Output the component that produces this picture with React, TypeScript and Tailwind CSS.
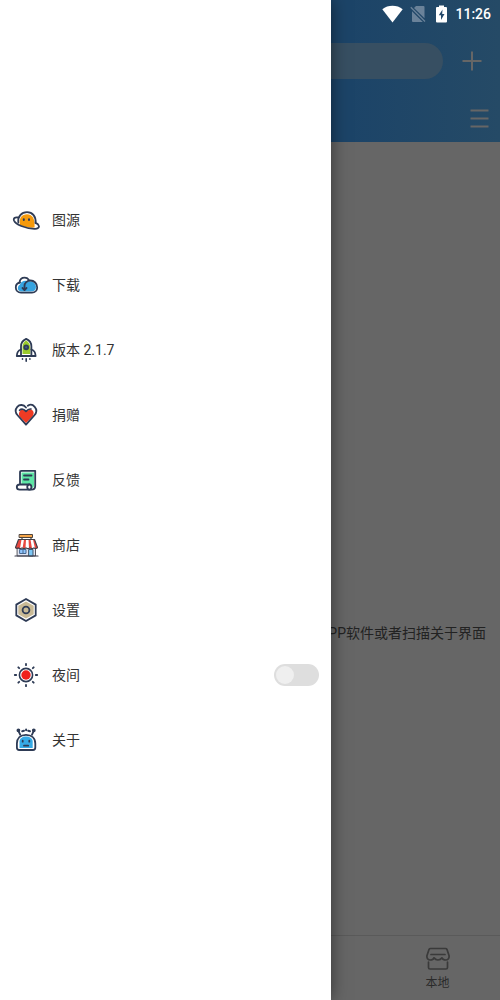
import { useState } from 'react';
import type { ReactNode } from 'react';

const INK = '#2e3b55';

interface MenuItem {
  id: string;
  label: string;
  icon: ReactNode;
}

function MenuIcon({ children }: { children: ReactNode }) {
  return (
    <svg
      viewBox="0 0 28 28"
      className="size-7 shrink-0"
      fill="none"
      stroke={INK}
      strokeWidth="1.8"
      strokeLinecap="round"
      strokeLinejoin="round"
      aria-hidden="true"
    >
      {children}
    </svg>
  );
}

const menuItems: MenuItem[] = [
  {
    id: 'source',
    label: '图源',
    icon: (
      <MenuIcon>
        <path d="M8 19C6.500 12 10 8.300 15 8.300S23 12 22.600 21.500C18 22 12 21 8 19Z" fill="#f59a0c" stroke="none" />
        <path d="M6.300 16.500C5.500 10.500 9.500 6.200 15 6.200S24.200 10.500 23.600 17" />
        <path d="M6 11.500C2.500 11 1.300 12.300 2 14.500C3.500 18.500 13 22.500 22.500 22.800C25.500 23 27.500 21.600 26.800 19.800C26.300 18.300 25 17.300 23.600 17" />
        <path d="M11.800 13.300v0.800M17 13.300v0.800" strokeWidth="2" />
      </MenuIcon>
    ),
  },
  {
    id: 'download',
    label: '下载',
    icon: (
      <MenuIcon>
        <path d="M9 20.500C5 20 5 15 8 13.500C9 9.500 14 9 16 10.500C21 9 24 13 24 16C24 19 22 20.500 19 20.500Z" fill="#35a3e0" stroke="none" />
        <path d="M8 11.500C5 12 3.800 14.300 3.800 16.500C3.800 19.500 6 21.600 9 21.600H20C23 21.600 25.200 19.500 25.200 16.500C25.200 12.500 22 9.500 18.500 9.500C15 9.500 12.500 12 12.500 15V18.500" />
        <path d="M7.500 11.500C7.800 8.500 10 6.700 12.700 6.700C14.500 6.700 15.800 7.500 16.800 8.800" />
        <path d="M10.500 17L12.500 19L14.500 17" />
      </MenuIcon>
    ),
  },
  {
    id: 'version',
    label: '版本 2.1.7',
    icon: (
      <MenuIcon>
        <path d="M10.500 18V10C11 7 12.500 5.500 14.200 4.500C17 6 18.300 9 18.300 12V18Z" fill="#9acb2c" stroke="none" />
        <path d="M9 20V10.500C9 7 11.200 4.200 14.200 2.900C17.200 4.200 19.400 7 19.400 10.500V20Z" />
        <path d="M9 13.500C6 14.500 4.800 16.500 4.800 20H9M19.400 13.500C22.400 14.500 23.600 16.500 23.600 20H19.400" />
        <circle cx="14.200" cy="11.300" r="2" fill="#3b5a8c" />
        <path d="M10.500 22.700V23.300M14.200 22.700V25.200M17.900 22.700V23.300" strokeWidth="1.600" />
      </MenuIcon>
    ),
  },
  {
    id: 'donate',
    label: '捐赠',
    icon: (
      <MenuIcon>
        <path d="M14 22L8 16C6 13.500 7 9.500 10 8.200L14 10.500L18 8.200C21.800 8.700 22.800 12.500 20.300 15.700Z" fill="#ef3b24" stroke="none" />
        <path d="M7.500 9.300C9.500 7.300 12 8 14 10.500C15.500 8.500 17 7.700 19 8" strokeWidth="1.600" />
        <path d="M14 6.500C11.500 3.300 7.500 3.300 5.300 5.800C3 8.500 3.500 12 5.800 14.500L14 23.700L22.200 14.500C24.500 12 25 8.500 22.700 5.800C20.800 3.600 18 3.200 15.800 4.800" />
      </MenuIcon>
    ),
  },
  {
    id: 'feedback',
    label: '反馈',
    icon: (
      <MenuIcon>
        <path d="M9.500 6.500H22V19C22 21 21 22 20 22L19 18H9.500Z" fill="#5de6a5" stroke="none" />
        <path d="M8 18V6.500C8 5.300 8.500 4.800 9.500 4.800H23.200V20C23.200 22.300 21.700 23.700 19.500 23.700H7.700C5.800 23.700 4.800 22.500 4.800 21.100S5.800 18.500 7.700 18.500H17.500" />
        <path d="M17.500 18.500C14.500 18.500 14.500 23.700 17.500 23.700C20 23.700 20 18.500 17.500 18.500Z" fill="#fff" />
        <path d="M12 9.500H19.500M12 13.500H16.500" />
      </MenuIcon>
    ),
  },
  {
    id: 'shop',
    label: '商店',
    icon: (
      <MenuIcon>
        <path d="M5.500 14H23.500V25H5.500Z" fill="#dfe4f3" stroke="#55565f" strokeWidth="1" />
        <path d="M10 7V9M19 7V9" strokeWidth="1.200" stroke="#444" />
        <path d="M7.500 3.500H20.500V6.500H7.500Z" fill="#f6a64a" stroke="#4f443c" strokeWidth="1" />
        <path d="M6.500 8.500H22.500L25.500 16.500H3.500Z" fill="#fff" stroke="none" />
        <path d="M6.500 8.500H9.500L8 17.500H3.500V16ZM12 8.500H14L13.500 17.500H10.500ZM16.500 8.500H18.500L20 17.500H17ZM21 8.500H22.500L25.500 16V17.500H23Z" fill="#e8473f" stroke="none" />
        <path d="M6.500 8.500H22.500L25.500 16.500Q24 18.500 22 16.800Q20 18.500 18 16.800Q16 18.500 14 16.800Q12 18.500 10 16.800Q8 18.500 6.500 16.800Q5 18 3.500 16.500Z" stroke="#3f3f48" strokeWidth="1.100" />
        <path d="M8 18.500H14V22.500H8ZM11 18.500V22.500" fill="#8fc6ff" stroke="#47678e" strokeWidth="1" />
        <path d="M17 18.500H21V25H17Z" fill="#7cc7f5" stroke="#40566e" strokeWidth="1" />
        <path d="M3 25H26" strokeWidth="1.200" stroke="#3c3d4c" />
      </MenuIcon>
    ),
  },
  {
    id: 'settings',
    label: '设置',
    icon: (
      <MenuIcon>
        <path d="M14 5.500L21.700 9.800V18.200L14 22.500L6.300 18.200V9.800Z" fill="#c9ba96" stroke="none" />
        <path d="M14 3L23.700 8.600V19.400L14 25L4.300 19.400V8.600Z" />
        <circle cx="14" cy="14" r="3.400" />
      </MenuIcon>
    ),
  },
  {
    id: 'night',
    label: '夜间',
    icon: (
      <MenuIcon>
        <circle cx="14" cy="14" r="4.700" fill="#f0201c" stroke="none" />
        <circle cx="14" cy="14" r="6.600" strokeWidth="1.600" />
        <path d="M14 2.800V4.200M14 23.800V25.200M2.800 14H4.200M23.800 14H25.200M6.300 6.300L7.200 7.200M20.800 20.800L21.700 21.700M21.700 6.300L20.800 7.200M7.200 20.800L6.300 21.700" />
      </MenuIcon>
    ),
  },
  {
    id: 'about',
    label: '关于',
    icon: (
      <MenuIcon>
        <path d="M7.500 22V15.500C7.500 12.500 10.500 10.500 14 10.500S20.700 12.500 20.700 15.500V22Z" fill="#35aae6" stroke="none" />
        <path d="M4.900 21.500V17.500C4.900 12 8.500 8.800 14 8.800S23.300 12 23.300 17.500V21.500C23.300 23.300 22.500 24 21 24H7.200C5.700 24 4.900 23.300 4.900 21.500Z" />
        <path d="M8.300 8.800L6.500 5M19.900 8.800L21.700 5" />
        <circle cx="6.400" cy="4.300" r="1" fill={INK} />
        <circle cx="21.800" cy="4.300" r="1" fill={INK} />
        <path d="M10.200 5.200L12 4.800M18 5.200L16.200 4.800M14.100 3.600V4.200" strokeWidth="2" />
        <path d="M10.700 14.700V15.700M17.300 14.700V15.700M12 19.700H16.200" />
      </MenuIcon>
    ),
  },
];

function StatusBar() {
  return (
    <div className="flex h-7 items-center justify-end pr-[9px] text-white">
      <svg viewBox="0 0 21 18" className="mr-[7px] h-[18px] w-[21px]" fill="currentColor" aria-hidden="true">
        <path d="M10.500 17.500L0.300 4.300C6 -0.300 15 -0.300 20.700 4.300Z" />
      </svg>
      <svg viewBox="0 0 16 18" className="mr-2.5 h-[18px] w-4" aria-hidden="true">
        <path d="M6 1H13.500Q14.500 1 14.500 2V13.200L4 3ZM2 6.200L12.800 17H3Q2 17 2 16Z" fill="#6a8299" />
        <path d="M0.800 2.300L15 16.500" stroke="#6a8299" strokeWidth="1.300" />
      </svg>
      <svg viewBox="0 0 11 18" className="mr-2 h-[18px] w-[11px]" aria-hidden="true">
        <path d="M3 0.500H8V2H10Q11 2 11 3V16.500Q11 17.500 10 17.500H1Q0 17.500 0 16.500V3Q0 2 1 2H3Z" fill="#fff" />
        <path d="M6.500 4.500L2.800 10.300H5V15L8.500 9H6.200Z" fill="#23486a" />
      </svg>
      <span className="text-sm font-medium">11:26</span>
    </div>
  );
}

function HomePage() {
  return (
    <div className="flex min-h-screen flex-col bg-[#666666]">
      <header className="bg-linear-to-r from-[#1c4468] from-70% to-[#254a66]">
        <StatusBar />
        <div className="flex h-[66px] items-center pl-4">
          <input
            type="search"
            aria-label="搜索"
            className="h-9 min-w-0 flex-1 rounded-full bg-[#374f62] px-4 text-sm outline-none"
          />
          <button type="button" aria-label="添加" className="flex h-9 w-[57px] items-center justify-center">
            <svg viewBox="0 0 20 20" className="size-5" stroke="#666666" strokeWidth="2" aria-hidden="true">
              <path d="M10 0.500V19.500M0.500 10H19.500" />
            </svg>
          </button>
        </div>
        <div className="flex h-12 items-center justify-end pr-[11px]">
          <button type="button" aria-label="列表">
            <svg viewBox="0 0 19 19" className="block size-[19px]" stroke="#666666" strokeWidth="2" aria-hidden="true">
              <path d="M0.500 1.500H18.500M0.500 9.500H18.500M0.500 17.500H18.500" />
            </svg>
          </button>
        </div>
      </header>

      <main className="flex flex-1 items-center justify-end pt-[188px] pr-[14px]">
        <p className="text-sm text-[#222222]">PP软件或者扫描关于界面</p>
      </main>

      <nav className="grid h-[65px] grid-cols-4 border-t border-[#5a5a5a]">
        <a href="#local" className="col-start-4 flex flex-col items-center pt-[11px] text-xs text-[#2b2b2b]">
          <svg
            viewBox="0 0 24 24"
            className="size-6"
            fill="none"
            stroke="#3a3a3a"
            strokeWidth="1.700"
            strokeLinecap="round"
            strokeLinejoin="round"
            aria-hidden="true"
          >
            <path d="M4.500 1.500H19.500Q20.500 1.500 21 2.500L23 8.500C23.500 11 22 13 19.800 13C17.800 13 16.500 12 16 10.800C15 12.300 13.500 13 12 13S9 12.300 8 10.800C7.500 12 6.200 13 4.200 13C2 13 0.500 11 1 8.500L3 2.500Q3.500 1.500 4.500 1.500Z" />
            <path d="M5 7.500H19M2.500 15V20.500Q2.500 22 4 22H20Q21.500 22 21.500 20.500V15" />
          </svg>
          <span className="mt-1">本地</span>
        </a>
      </nav>
    </div>
  );
}

function Drawer() {
  const [night, setNight] = useState(false);

  return (
    <aside className="absolute inset-y-0 left-0 w-[331px] bg-white pt-[187px] shadow-[0_0_16px_rgba(0,0,0,0.5)]">
      <ul>
        {menuItems.map((item) => (
          <li key={item.id} className="flex h-[65px] items-center px-3 text-sm text-[#333333]">
            {item.id === 'night' ? (
              <label className="flex flex-1 items-center gap-3">
                {item.icon}
                <span className="flex-1">{item.label}</span>
                <input
                  type="checkbox"
                  role="switch"
                  checked={night}
                  onChange={(e) => setNight(e.target.checked)}
                  className="h-[22px] w-[45px] appearance-none rounded-full bg-[#dedede] p-0.5 before:block before:size-[18px] before:rounded-full before:bg-[#efefef] checked:bg-sky-500 checked:before:ml-auto"
                />
              </label>
            ) : (
              <button type="button" className="flex flex-1 items-center gap-3 text-left">
                {item.icon}
                <span>{item.label}</span>
              </button>
            )}
          </li>
        ))}
      </ul>
    </aside>
  );
}

export default function App() {
  return (
    <div className="relative min-h-screen overflow-hidden font-['Roboto','Noto_Sans_CJK_SC',sans-serif]">
      <HomePage />
      <Drawer />
    </div>
  );
}
